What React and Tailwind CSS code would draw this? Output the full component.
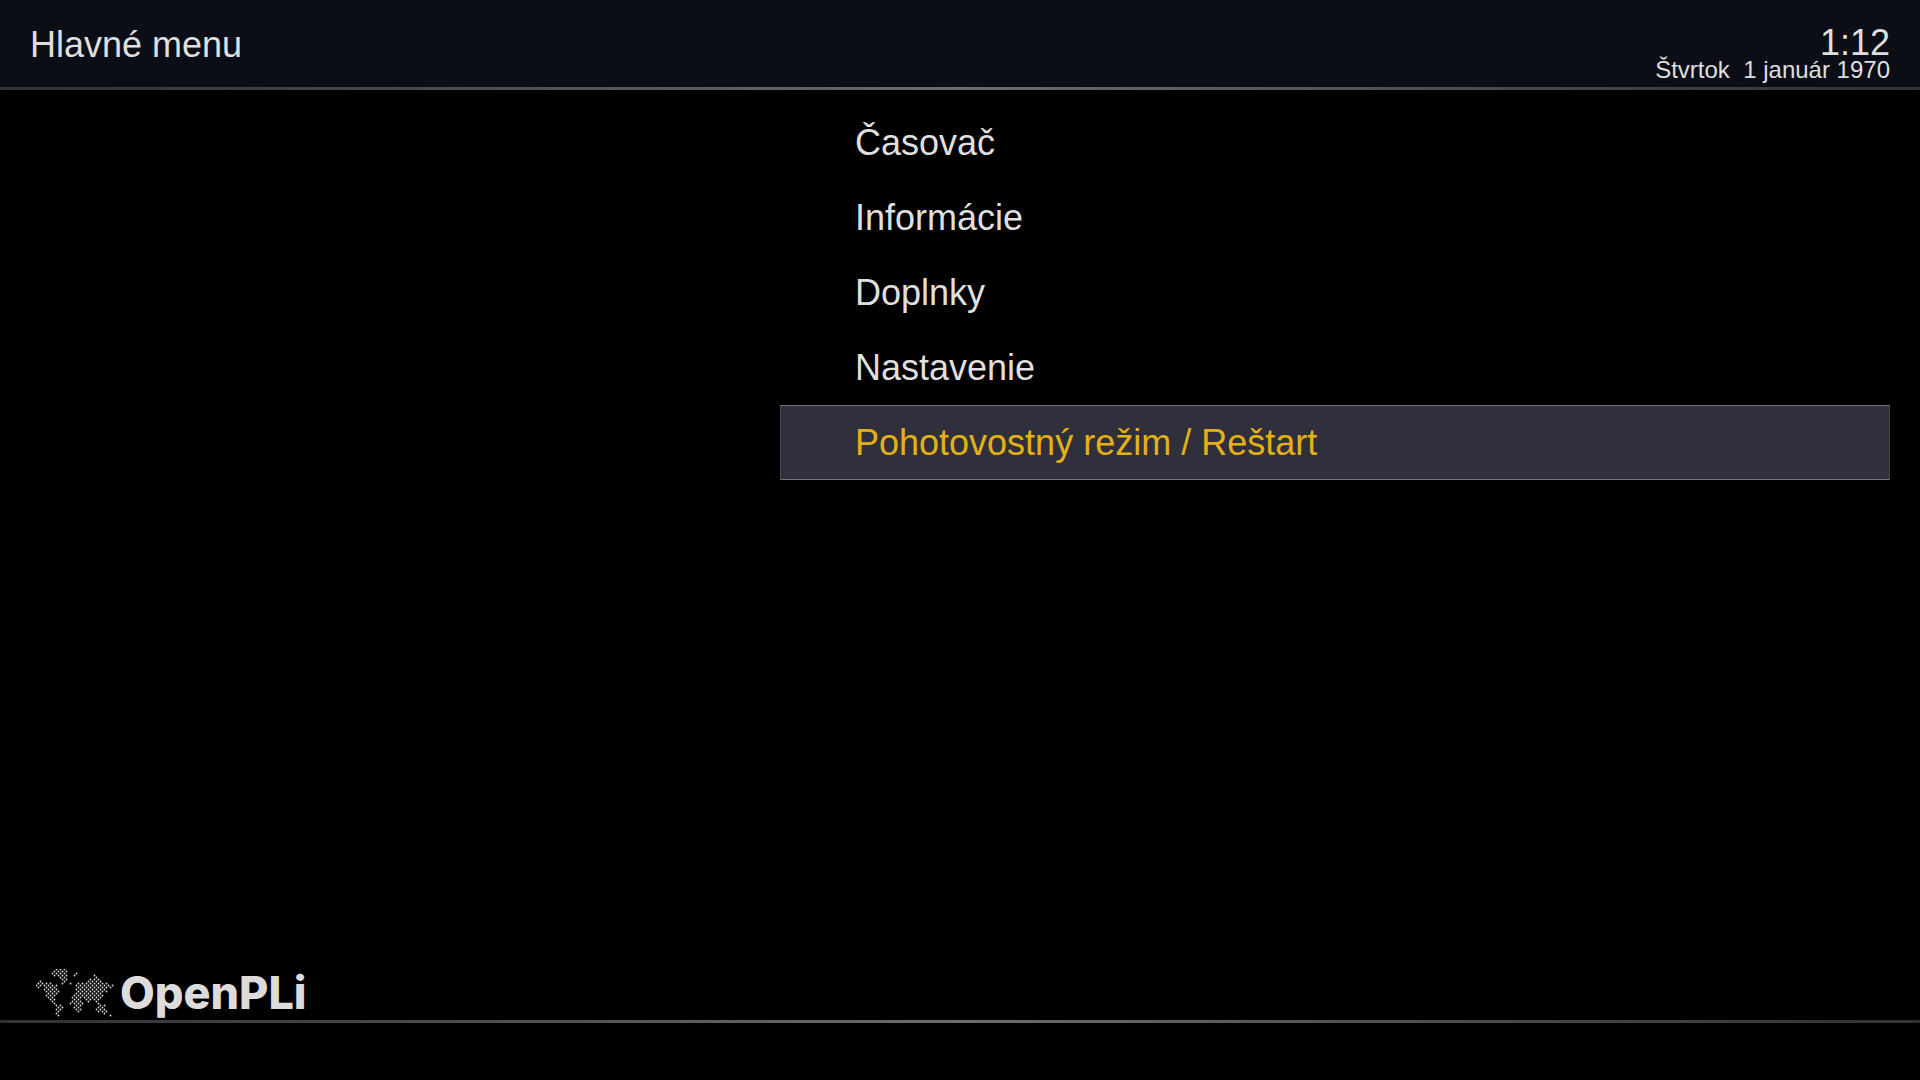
const items = ["Časovač", "Informácie", "Doplnky", "Nastavenie", "Pohotovostný režim / Reštart"];

// Half-tone world map: each row lists [start, end] runs of dots, rows are 2 units apart.
const mapRows = [
  [[17, 30]],
  [[16, 30]],
  [[16, 22], [23, 31], [38, 41]],
  [[16, 20], [22, 31], [38, 41], [57, 60]],
  [[24, 31], [57, 60]],
  [[25, 31], [54, 62]],
  [[1, 4], [26, 30], [51, 64]],
  [[0, 14], [26, 28], [32, 34], [40, 46], [50, 73]],
  [[0, 20], [40, 77]],
  [[0, 3], [7, 21], [39, 74]],
  [[8, 21], [33, 35], [40, 68]],
  [[8, 22], [39, 67], [69, 71]],
  [[9, 20], [37, 66]],
  [[9, 18], [38, 66]],
  [[10, 18], [36, 65]],
  [[12, 18], [35, 45], [48, 62]],
  [[14, 17], [34, 46], [51, 54], [57, 61]],
  [[18, 20], [34, 46], [60, 62]],
  [[19, 27], [38, 45], [61, 68]],
  [[19, 27], [38, 44], [62, 68]],
  [[20, 26], [39, 44], [60, 70]],
  [[20, 24], [39, 43], [62, 70]],
  [[20, 23], [67, 69]],
  [[19, 22], [73, 76]],
];

function WorldMap() {
  const dots = [];
  mapRows.forEach((runs, row) => {
    const shift = row % 2 === 0 ? 0 : 2;
    runs.forEach(([from, to]) => {
      for (let x = from; x <= to; x += 1) {
        if (x % 4 === shift) dots.push(<circle key={x + "-" + row} cx={x + 0.5} cy={row * 2 + 0.5} r="0.9" />);
      }
    });
  });
  return (
    <svg width="78" height="48" viewBox="0 0 78 48" fill="#d8d8d8" aria-hidden="true">
      {dots}
    </svg>
  );
}

function Rule() {
  return <div className="h-[3px] bg-linear-to-r from-[#303134] via-[#6b6c70] to-[#303134]" />;
}

export default function App() {
  return (
    <div className="flex min-h-screen flex-col bg-black font-['Liberation_Sans',Arial,sans-serif] text-4xl text-[#dfdfdf]">
      <header>
        <div className="flex h-[87px] items-start justify-between bg-[#0b0e16] px-[30px]">
          <h1 className="pt-[25px]">Hlavné menu</h1>
          <div className="flex flex-col items-end pt-[27px] text-right">
            <time className="leading-8">1:12</time>
            <time className="text-2xl leading-[22px] whitespace-pre">Štvrtok  1 január 1970</time>
          </div>
        </div>
        <Rule />
      </header>
      <main className="flex flex-1 justify-end px-[30px] pt-[15px]">
        <nav className="flex w-[1110px] flex-col">
          {items.map((item, i) => (
            <button
              key={item}
              type="button"
              className={
                i === 4
                  ? "h-[75px] border border-y-[#77777b] border-x-[#47484d] bg-[#2f303c] px-[74px] pt-px text-left text-[#e4b017]"
                  : "h-[75px] border border-transparent px-[74px] pt-px text-left"
              }
            >
              {item}
            </button>
          ))}
        </nav>
      </main>
      <footer>
        <div className="flex items-end px-9 pb-[3px]">
          <WorldMap />
          <span className="ml-1.5 font-['Inter',sans-serif] text-[45px] leading-[48px] font-extrabold text-[#dcdcdc]">OpenPLi</span>
        </div>
        <Rule />
        <div className="h-[57px]" />
      </footer>
    </div>
  );
}
